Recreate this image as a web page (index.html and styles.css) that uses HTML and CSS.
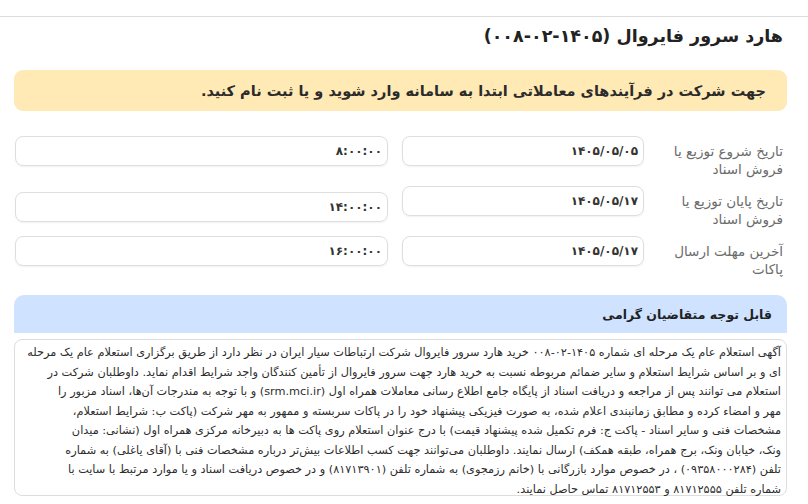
FILE: index.html
```html
<!DOCTYPE html>
<html lang="fa" dir="rtl">
<head>
  <meta charset="UTF-8">
  <title>هارد سرور فایروال</title>
  <link rel="stylesheet" href="styles.css">
</head>
<body>
<div class="topbar"></div>
<main class="page">

  <h1 class="tender-title">هارد سرور فایروال (۱۴۰۵-۰۲-۰۰۸)</h1>

  <div class="alert-warning">جهت شرکت در فرآیندهای معاملاتی ابتدا به سامانه وارد شوید و یا ثبت نام کنید.</div>

  <div class="schedule">
    <div class="field-label">تاریخ شروع توزیع یا فروش اسناد</div>
    <div class="field-box">۱۴۰۵/۰۵/۰۵</div>
    <div class="field-box">۸:۰۰:۰۰</div>

    <div class="field-label">تاریخ پایان توزیع یا فروش اسناد</div>
    <div class="field-box">۱۴۰۵/۰۵/۱۷</div>
    <div class="field-box shifted">۱۴:۰۰:۰۰</div>

    <div class="field-label">آخرین مهلت ارسال پاکات</div>
    <div class="field-box">۱۴۰۵/۰۵/۱۷</div>
    <div class="field-box">۱۶:۰۰:۰۰</div>
  </div>

  <section class="notice">
    <div class="notice-head">قابل توجه متقاضیان گرامی</div>
    <div class="notice-body">
      آگهی استعلام عام یک مرحله ای شماره ۱۴۰۵-۰۲-۰۰۸ خرید هارد سرور فایروال شرکت ارتباطات سیار ایران در نظر دارد از طریق برگزاری استعلام عام یک مرحله<br>
      ای و بر اساس شرایط استعلام و سایر ضمائم مربوطه نسبت به خرید هارد جهت سرور فایروال از تأمین کنندگان واجد شرایط اقدام نماید. داوطلبان شرکت در<br>
      استعلام می توانند پس از مراجعه و دریافت اسناد از پایگاه جامع اطلاع رسانی معاملات همراه اول (srm.mci.ir) و با توجه به مندرجات آن‌ها، اسناد مزبور را<br>
      مهر و امضاء کرده و مطابق زمانبندی اعلام شده، به صورت فیزیکی پیشنهاد خود را در پاکات سربسته و ممهور به مهر شرکت (پاکت ب: شرایط استعلام،<br>
      مشخصات فنی و سایر اسناد - پاکت ج: فرم تکمیل شده پیشنهاد قیمت) با درج عنوان استعلام روی پاکت ها به دبیرخانه مرکزی همراه اول (نشانی: میدان<br>
      ونک، خیابان ونک، برج همراه، طبقه همکف) ارسال نمایند. داوطلبان می‌توانند جهت کسب اطلاعات بیش‌تر درباره مشخصات فنی با (آقای یاغلی) به شماره<br>
      تلفن (۰۹۳۵۸۰۰۰۲۸۴) ، در خصوص موارد بازرگانی با (خانم رزمجوی) به شماره تلفن (۸۱۷۱۳۹۰۱) و در خصوص دریافت اسناد و یا موارد مرتبط با سایت با<br>
      شماره تلفن ۸۱۷۱۲۵۵۵ و ۸۱۷۱۲۵۵۳ تماس حاصل نمایند.
    </div>
  </section>

</main>
</body>
</html>
```

FILE: styles.css
```css
body {
  margin: 0;
  font-family: "DejaVu Sans", sans-serif;
  color: #212529;
  background: #fff;
}

.topbar {
  height: 16px;
  border-bottom: 1px solid #dcdcdc;
}

.page {
  padding: 0 21px 0 14px;
}

.tender-title {
  margin: 1px 4px 0 0;
  font-size: 17.5px;
  line-height: 36px;
  font-weight: bold;
  color: #222;
}

.alert-warning {
  margin-top: 16px;
  padding: 0 21px;
  height: 41px;
  display: flex;
  align-items: center;
  background-color: #ffe9b5;
  border-radius: 9px;
  font-size: 14.5px;
  font-weight: bold;
  color: #2b2b2b;
}

.schedule {
  margin-top: 25px;
  padding-right: 4px;
  display: grid;
  grid-template-columns: 125px 242px 373px;
  column-gap: 14px;
  row-gap: 8px;
  align-items: start;
}

.field-label {
  padding-top: 6px;
  padding-left: 12px;
  font-size: 13.5px;
  line-height: 18px;
  color: #6b6b6b;
}

.field-box {
  height: 28px;
  padding: 0 5px;
  display: flex;
  align-items: center;
  border: 1px solid #dedede;
  border-radius: 8px;
  box-shadow: 0 1px 2px rgba(0, 0, 0, 0.06);
  font-size: 12px;
  font-weight: bold;
  color: #333;
}

.field-box.shifted {
  margin-top: 6px;
}

.notice {
  margin-top: 17px;
}

.notice-head {
  height: 38px;
  padding: 0 15px;
  display: flex;
  align-items: center;
  background-color: #cfe2ff;
  border-radius: 10px 10px 0 0;
  font-size: 12.5px;
  font-weight: bold;
  color: #222;
}

.notice-body {
  margin-top: 6px;
  height: 147px;
  padding: 3px 5px 5px 5px;
  border: 1px solid #dddddd;
  border-radius: 8px;
  font-size: 11.3px;
  line-height: 19.5px;
  color: #2d2d2d;
}
```
